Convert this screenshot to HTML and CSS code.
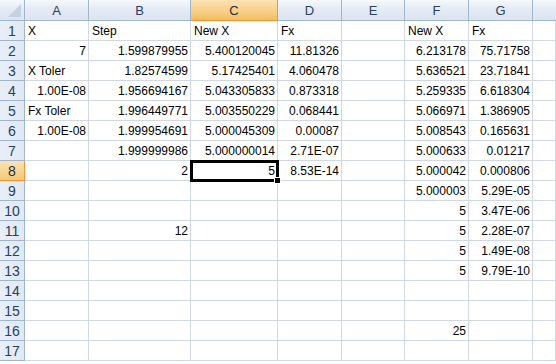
FILE: index.html
```html
<!DOCTYPE html>
<html>
<head>
<meta charset="utf-8">
<link rel="stylesheet" href="styles.css">
</head>
<body>
<div class="sheet">
  <div class="hd corner"><span class="tri"></span></div>
  <div class="hd col">A</div><div class="hd col">B</div><div class="hd col sel">C</div><div class="hd col">D</div><div class="hd col">E</div><div class="hd col">F</div><div class="hd col">G</div><div class="hd col last"></div>

  <div class="hd row">1</div>
  <div class="c">X</div><div class="c">Step</div><div class="c">New X</div><div class="c">Fx</div><div class="c"></div><div class="c">New X</div><div class="c">Fx</div><div class="c"></div>

  <div class="hd row">2</div>
  <div class="c r">7</div><div class="c r">1.599879955</div><div class="c r">5.400120045</div><div class="c r">11.81326</div><div class="c"></div><div class="c r">6.213178</div><div class="c r">75.71758</div><div class="c"></div>

  <div class="hd row">3</div>
  <div class="c">X Toler</div><div class="c r">1.82574599</div><div class="c r">5.17425401</div><div class="c r">4.060478</div><div class="c"></div><div class="c r">5.636521</div><div class="c r">23.71841</div><div class="c"></div>

  <div class="hd row">4</div>
  <div class="c r">1.00E-08</div><div class="c r">1.956694167</div><div class="c r">5.043305833</div><div class="c r">0.873318</div><div class="c"></div><div class="c r">5.259335</div><div class="c r">6.618304</div><div class="c"></div>

  <div class="hd row">5</div>
  <div class="c">Fx Toler</div><div class="c r">1.996449771</div><div class="c r">5.003550229</div><div class="c r">0.068441</div><div class="c"></div><div class="c r">5.066971</div><div class="c r">1.386905</div><div class="c"></div>

  <div class="hd row">6</div>
  <div class="c r">1.00E-08</div><div class="c r">1.999954691</div><div class="c r">5.000045309</div><div class="c r">0.00087</div><div class="c"></div><div class="c r">5.008543</div><div class="c r">0.165631</div><div class="c"></div>

  <div class="hd row">7</div>
  <div class="c"></div><div class="c r">1.999999986</div><div class="c r">5.000000014</div><div class="c r">2.71E-07</div><div class="c"></div><div class="c r">5.000633</div><div class="c r">0.01217</div><div class="c"></div>

  <div class="hd row sel">8</div>
  <div class="c"></div><div class="c r">2</div><div class="c r active">5</div><div class="c r">8.53E-14</div><div class="c"></div><div class="c r">5.000042</div><div class="c r">0.000806</div><div class="c"></div>

  <div class="hd row">9</div>
  <div class="c"></div><div class="c"></div><div class="c"></div><div class="c"></div><div class="c"></div><div class="c r">5.000003</div><div class="c r">5.29E-05</div><div class="c"></div>

  <div class="hd row">10</div>
  <div class="c"></div><div class="c"></div><div class="c"></div><div class="c"></div><div class="c"></div><div class="c r">5</div><div class="c r">3.47E-06</div><div class="c"></div>

  <div class="hd row">11</div>
  <div class="c"></div><div class="c r">12</div><div class="c"></div><div class="c"></div><div class="c"></div><div class="c r">5</div><div class="c r">2.28E-07</div><div class="c"></div>

  <div class="hd row">12</div>
  <div class="c"></div><div class="c"></div><div class="c"></div><div class="c"></div><div class="c"></div><div class="c r">5</div><div class="c r">1.49E-08</div><div class="c"></div>

  <div class="hd row">13</div>
  <div class="c"></div><div class="c"></div><div class="c"></div><div class="c"></div><div class="c"></div><div class="c r">5</div><div class="c r">9.79E-10</div><div class="c"></div>

  <div class="hd row">14</div>
  <div class="c"></div><div class="c"></div><div class="c"></div><div class="c"></div><div class="c"></div><div class="c"></div><div class="c"></div><div class="c"></div>

  <div class="hd row">15</div>
  <div class="c"></div><div class="c"></div><div class="c"></div><div class="c"></div><div class="c"></div><div class="c"></div><div class="c"></div><div class="c"></div>

  <div class="hd row">16</div>
  <div class="c"></div><div class="c"></div><div class="c"></div><div class="c"></div><div class="c"></div><div class="c r">25</div><div class="c"></div><div class="c"></div>

  <div class="hd row">17</div>
  <div class="c"></div><div class="c"></div><div class="c"></div><div class="c"></div><div class="c"></div><div class="c"></div><div class="c"></div><div class="c"></div>
</div>
</body>
</html>
```

FILE: styles.css
```css
html, body {
  margin: 0;
  padding: 0;
  background: #ffffff;
}
body {
  font-family: "Liberation Sans", Arial, sans-serif;
  font-size: 12px;
  color: #000000;
  width: 556px;
  height: 364px;
  overflow: hidden;
}
.sheet {
  display: grid;
  grid-template-columns: 25px 64px 102px 87px 64px 63px 64px 64px 1fr;
  grid-template-rows: 21px repeat(17, 20px);
  width: 556px;
}
.c {
  box-sizing: border-box;
  border-right: 1px solid #d0d7e5;
  border-bottom: 1px solid #d0d7e5;
  padding: 1px 2px 0 3px;
  line-height: 19px;
  white-space: nowrap;
}
.r {
  text-align: right;
}
.hd {
  box-sizing: border-box;
  background: linear-gradient(#f6f9fd, #e4ebf5 45%, #dce4ef);
  border-right: 1px solid #9eb6ce;
  border-bottom: 1px solid #9eb6ce;
  color: #27415f;
  text-align: center;
  font-size: 13px;
}
.hd.col {
  line-height: 21px;
}
.hd.row {
  line-height: 20px;
  font-size: 14px;
  background: linear-gradient(90deg, #e9eff8, #e1e8f2);
}
.hd.sel {
  background: linear-gradient(#fbe3b5, #f8d290 45%, #f1c15f);
  color: #1f2f45;
  border-right-color: #f29536;
  border-bottom-color: #f29536;
}
.hd.row.sel {
  background: linear-gradient(#fbe3b5, #f5c876);
}
.hd.last {
  border-right: none;
}
.corner {
  position: relative;
}
.tri {
  position: absolute;
  right: 3px;
  bottom: 3px;
  width: 0;
  height: 0;
  border-left: 13px solid transparent;
  border-bottom: 13px solid #c3d1e3;
}
.active {
  position: relative;
  outline: 3px solid #000000;
  outline-offset: -2px;
  z-index: 1;
}
.active::after {
  content: "";
  position: absolute;
  right: -4px;
  bottom: -4px;
  width: 5px;
  height: 5px;
  background: #000000;
  border: 1px solid #ffffff;
}
```
